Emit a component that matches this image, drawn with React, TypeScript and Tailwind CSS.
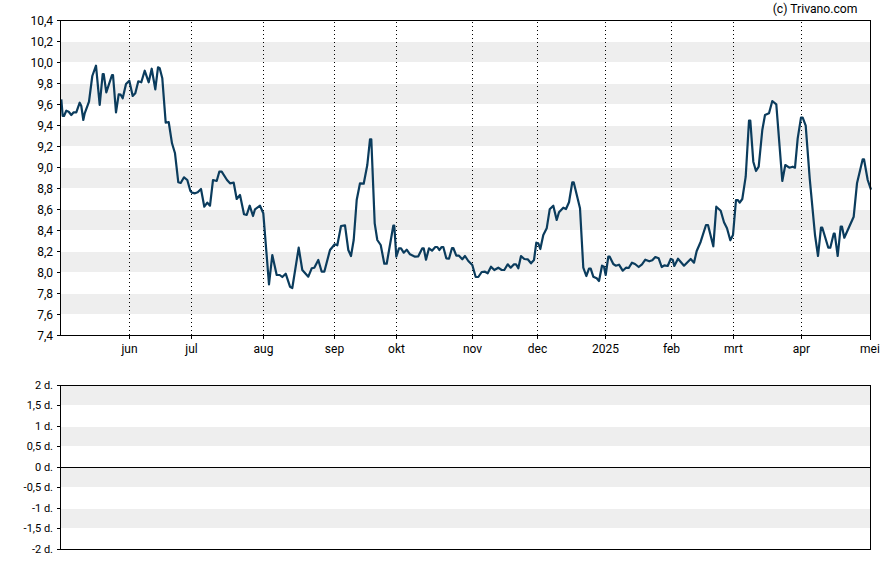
const seg = (ox: number, oy: number, pts: number[][]) =>
  pts.map(([x, y]) => `${(ox + x / 3).toFixed(1)},${(oy + y / 3).toFixed(1)}`).join(" ");

const line = [
  seg(58, 60, [[10,118],[14,168],[18,168],[25,152],[32,155],[40,165],[47,157],[55,157],[65,128],[70,138],[76,180],[80,160],[93,125],[103,48],[114,17],[125,135],[134,42],[137,42],[145,97],[162,45],[165,45],[174,157],[182,103],[188,104],[194,115],[204,72],[214,62],[224,108],[232,100],[241,64],[250,67],[260,32],[272,67],[281,26],[292,88],[300,22],[305,25],[313,55],[323,188],[332,186],[342,250],[351,280],[361,367],[368,369],[378,352],[388,360],[397,392],[402,398]]),
  seg(195, 165, [[0,85],[8,82],[18,72],[28,125],[37,113],[45,122],[54,45],[65,48],[73,20],[80,20],[96,45],[105,55],[116,53],[125,102],[135,90],[147,148],[155,150],[164,122],[174,153],[180,133],[195,122],[205,145],[222,358],[232,270],[245,330],[254,330],[262,336],[272,326],[285,365],[292,369],[311,248],[322,315],[340,335],[350,310],[358,308],[370,285],[380,320],[388,320]]),
  seg(330, 135, [[0,345],[8,335],[14,328],[22,331],[33,273],[45,271],[55,345],[63,363],[71,315],[80,195],[90,145],[101,146],[112,90],[120,13],[124,13],[134,265],[142,315],[152,330],[163,386],[170,386],[190,272],[193,272],[199,365],[207,340],[213,340],[221,353],[230,344],[240,358],[255,365],[265,364],[277,340],[281,340],[288,374],[297,340],[306,347],[316,336],[322,336],[328,345],[335,336],[340,336],[349,370],[357,371],[366,339],[370,339],[379,362],[387,362],[397,373]]),
  seg(465, 175, [[0,243],[10,258],[22,270],[32,306],[40,306],[50,291],[60,290],[68,295],[78,275],[88,285],[100,278],[110,285],[118,285],[128,268],[137,278],[147,268],[153,268],[160,280],[168,243],[178,252],[188,253],[198,265],[207,255],[214,203],[220,205],[226,222],[235,180],[245,160],[254,103],[265,92],[275,135],[282,112],[295,98],[303,102],[312,82],[322,22],[326,22],[345,100],[355,278],[364,303],[372,281],[377,281],[385,305],[395,310],[402,318]]),
  seg(600, 115, [[6,452],[12,455],[17,480],[25,425],[29,425],[40,447],[47,452],[57,449],[68,467],[78,458],[86,459],[96,443],[105,447],[116,456],[126,448],[136,434],[148,439],[157,436],[166,426],[176,430],[185,456],[193,451],[203,453],[212,432],[218,434],[223,453],[234,431],[252,452],[272,432],[282,443],[290,408],[302,380],[318,330],[324,330],[340,394],[349,275],[362,287],[372,322],[381,340],[391,376],[399,360]]),
  seg(735, 95, [[3,315],[8,315],[14,323],[22,312],[32,245],[42,77],[46,77],[55,200],[63,228],[71,215],[82,105],[90,60],[102,55],[112,18],[124,28],[142,258],[151,210],[163,218],[173,215],[180,218],[188,130],[198,68],[203,68],[212,92],[224,250],[240,420],[249,483],[258,398],[262,398],[280,458],[286,458],[296,416],[299,416],[308,483],[317,395],[321,395],[328,428],[345,390],[356,365],[366,265],[383,193],[387,193],[398,255],[408,284]]),
].join(" ");

const yLabels = ["10,4","10,2","10,0","9,8","9,6","9,4","9,2","9,0","8,8","8,6","8,4","8,2","8,0","7,8","7,6","7,4"];
const months: [string, number][] = [["jun",129],["jul",191],["aug",263],["sep",334],["okt",396],["nov",472],["dec",537],["2025",605],["feb",671],["mrt",733],["apr",801]];
const dLabels = ["2 d.","1,5 d.","1 d.","0,5 d.","0 d.","-0,5 d.","-1 d.","-1,5 d.","-2 d."];
const dY = [385,405,426,446,467,487,508,528,549];

export default function App() {
  return (
    <div className="w-[888px] h-[565px] bg-white flex flex-col font-['Roboto',sans-serif] text-[12px] text-black">
      <svg width="888" height="370" viewBox="0 0 888 370" className="block shrink-0">
        {yLabels.map((_, i) =>
          i % 2 === 1 && i < 15 ? <rect key={i} x="61" y={20 + 21 * i + 1} width="809" height="20" fill="#eeeeee" /> : null
        )}
        {months.map(([m, x]) => (
          <g key={m}>
            <line x1={x + 0.5} x2={x + 0.5} y1="22" y2="335" stroke="#000" strokeDasharray="1 3" shapeRendering="crispEdges" />
            <rect x={x} y="335" width="1" height="4" fill="#000" />
            <text x={x + 0.5} y="353" textAnchor="middle" fill="#000">{m}</text>
          </g>
        ))}
        <polyline points={line} fill="none" stroke="#0b3c5d" strokeWidth="2.2" strokeLinejoin="round" />
        <rect x="60" y="20" width="811" height="1" fill="#000" />
        <rect x="60" y="335" width="811" height="1" fill="#000" />
        <rect x="60" y="20" width="1" height="316" fill="#000" />
        <rect x="870" y="20" width="1" height="320" fill="#000" />
        {yLabels.map((l, i) => (
          <g key={l}>
            <rect x="57" y={20 + 21 * i} width="3" height="1" fill="#000" />
            <text x="53" y={25 + 21 * i} textAnchor="end" fill="#000">{l}</text>
          </g>
        ))}
        <text x="870" y="353" textAnchor="middle" fill="#000">mei</text>
        <text x="857.5" y="13" textAnchor="end" fontSize="12.2" fill="#000">(c) Trivano.com</text>
      </svg>
      <svg width="888" height="195" viewBox="0 370 888 195" className="block shrink-0">
        {[0, 2, 4, 6].map((i) => (
          <rect key={i} x="61" y={dY[i] + 1} width="809" height={dY[i + 1] - dY[i] - 1} fill="#eeeeee" />
        ))}
        <rect x="60" y="385" width="811" height="1" fill="#000" />
        <rect x="60" y="467" width="811" height="1" fill="#000" />
        <rect x="60" y="549" width="811" height="1" fill="#000" />
        <rect x="60" y="385" width="1" height="165" fill="#000" />
        <rect x="870" y="385" width="1" height="165" fill="#000" />
        {dLabels.map((l, i) => (
          <g key={l}>
            <rect x="57" y={dY[i]} width="3" height="1" fill="#000" />
            <text x="53" y={dY[i] + 4} textAnchor="end" fontSize="11" fill="#000">{l}</text>
          </g>
        ))}
      </svg>
    </div>
  );
}
